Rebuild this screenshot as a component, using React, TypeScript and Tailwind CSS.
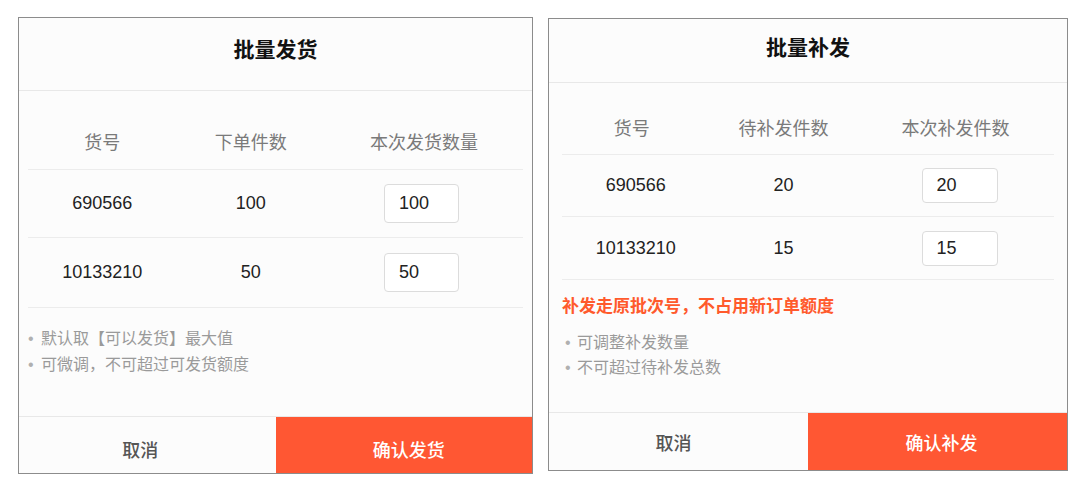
import React from 'react';

type Row = { sku: string; qty: string; value: string };

interface PanelProps {
  title: string;
  headers: [string, string, string];
  rows: Row[];
  confirmText: string;
  variant: 'ship' | 'resend';
}

const FONT = "font-['Liberation_Sans','Noto_Sans_CJK_SC',sans-serif]";

const ShipPanel: React.FC<PanelProps> = ({ title, headers, rows, confirmText, variant }) => {
  const isShip = variant === 'ship';

  return (
    <div
      className={
        isShip
          ? 'w-[515px] h-[457px] border border-[#8c8c8c] bg-[#fcfcfc] flex flex-col'
          : 'w-[520px] h-[453px] border border-[#8c8c8c] bg-[#fcfcfc] flex flex-col mt-px'
      }
    >
      {/* Title bar */}
      <div
        className={
          isShip
            ? 'h-[73px] border-b border-[#e8e8e8] flex items-center justify-center pb-[8px]'
            : 'h-[64px] border-b border-[#e8e8e8] flex items-center justify-center pb-[6px]'
        }
      >
        <span className="text-[21px] font-bold text-[#111]">{title}</span>
      </div>

      {/* Table */}
      <div className={isShip ? 'mx-[9px] mt-[26px]' : 'mx-[13px] mt-[21px]'}>
        <div
          className={
            isShip
              ? 'grid grid-cols-[3fr_3fr_4fr] h-[53px] items-center border-b border-[#ececec] text-[18px] text-[#7a7a7a]'
              : 'grid grid-cols-[3fr_3fr_4fr] h-[51px] items-center border-b border-[#ececec] text-[18px] text-[#7a7a7a]'
          }
        >
          {headers.map((h, i) => (
            <div key={h} className={!isShip && i === 0 ? 'text-center pr-[8px]' : 'text-center'}>
              {h}
            </div>
          ))}
        </div>

        {rows.map((r, i) => (
          <div
            key={r.sku}
            className={
              isShip
                ? i === 0
                  ? 'grid grid-cols-[3fr_3fr_4fr] h-[68px] items-center border-b border-[#ececec] text-[18px] text-[#222]'
                  : 'grid grid-cols-[3fr_3fr_4fr] h-[70px] items-center border-b border-[#ececec] text-[18px] text-[#222]'
                : i === 0
                  ? 'grid grid-cols-[3fr_3fr_4fr] h-[62px] items-center border-b border-[#ececec] text-[18px] text-[#222]'
                  : 'grid grid-cols-[3fr_3fr_4fr] h-[63px] items-center border-b border-[#ececec] text-[18px] text-[#222]'
            }
          >
            <div className="text-center">{r.sku}</div>
            <div className="text-center">{r.qty}</div>
            <div className="flex justify-center">
              <input
                defaultValue={r.value}
                className={
                  isShip
                    ? 'w-[75px] h-[39px] border border-[#dcdcdc] rounded-[4px] bg-white pl-[14px] text-[18px] text-[#222] outline-none ml-[-5px]'
                    : 'w-[76px] h-[35px] border border-[#dcdcdc] rounded-[4px] bg-white pl-[14px] text-[18px] text-[#222] outline-none ml-[8px]'
                }
              />
            </div>
          </div>
        ))}
      </div>

      {/* Notes */}
      {isShip ? (
        <div className="px-[9px] pt-[18px] text-[16px] leading-[26px] text-[#9a9a9a]">
          <div className="flex items-center">
            <span className="w-[13px] text-[#b0b0b0]">•</span>
            <span>默认取【可以发货】最大值</span>
          </div>
          <div className="flex items-center">
            <span className="w-[13px] text-[#b0b0b0]">•</span>
            <span>可微调，不可超过可发货额度</span>
          </div>
        </div>
      ) : (
        <div className="px-[13px] pt-[15px]">
          <div className="text-[17px] leading-[24px] font-semibold text-[#ff5a2c]">
            补发走原批次号，不占用新订单额度
          </div>
          <div className="mt-[11px] text-[16px] leading-[25px] text-[#9a9a9a]">
            <div className="flex items-center">
              <span className="w-[15px] pl-[3px] text-[#b0b0b0]">•</span>
              <span>可调整补发数量</span>
            </div>
            <div className="flex items-center">
              <span className="w-[15px] pl-[3px] text-[#b0b0b0]">•</span>
              <span>不可超过待补发总数</span>
            </div>
          </div>
        </div>
      )}

      {/* Footer buttons */}
      <div
        className={
          isShip
            ? 'mt-auto h-[57px] border-t border-[#e8e8e8] grid grid-cols-2 text-[18px] font-medium'
            : 'mt-auto h-[58px] border-t border-[#e8e8e8] grid grid-cols-2 text-[18px] font-medium'
        }
      >
        <button
          className={
            isShip
              ? 'flex items-center justify-center pt-[13px] pr-[14px] text-[#555]'
              : 'flex items-center justify-center pt-[6px] pr-[10px] text-[#555]'
          }
        >
          取消
        </button>
        <button
          className={
            isShip
              ? 'flex items-center justify-center pt-[13px] pl-[10px] bg-[#ff5733] text-white'
              : 'flex items-center justify-center pt-[6px] pl-[8px] bg-[#ff5733] text-white'
          }
        >
          {confirmText}
        </button>
      </div>
    </div>
  );
};

export default function App() {
  return (
    <div className={`w-[1082px] h-[492px] bg-white flex items-start gap-[15px] pl-[18px] pt-[17px] ${FONT}`}>
      <ShipPanel
        variant="ship"
        title="批量发货"
        headers={['货号', '下单件数', '本次发货数量']}
        rows={[
          { sku: '690566', qty: '100', value: '100' },
          { sku: '10133210', qty: '50', value: '50' },
        ]}
        confirmText="确认发货"
      />
      <ShipPanel
        variant="resend"
        title="批量补发"
        headers={['货号', '待补发件数', '本次补发件数']}
        rows={[
          { sku: '690566', qty: '20', value: '20' },
          { sku: '10133210', qty: '15', value: '15' },
        ]}
        confirmText="确认补发"
      />
    </div>
  );
}
